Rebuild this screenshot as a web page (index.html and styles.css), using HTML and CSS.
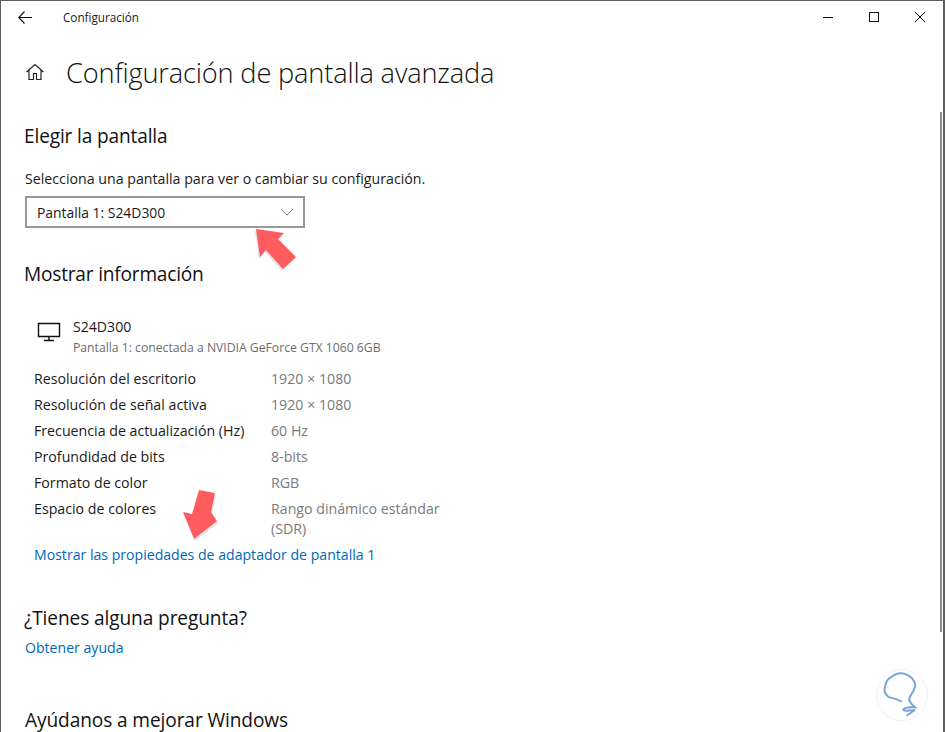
FILE: index.html
```html
<!DOCTYPE html>
<html lang="es">
<head>
<meta charset="utf-8">
<title>Configuración</title>
<link rel="stylesheet" href="styles.css">
</head>
<body>
<div class="window">
  <header class="titlebar">
    <svg class="back" width="15" height="13" viewBox="0 0 15 13"><path d="M6.5 .5 .8 6.5l5.7 6M.8 6.5H14" fill="none" stroke="#111" stroke-width="1.1"/></svg>
    <span class="apptitle">Configuración</span>
    <div class="controls">
      <svg width="12" height="12" viewBox="0 0 12 12"><path d="M1 6.5h10" stroke="#111" fill="none"/></svg>
      <svg width="12" height="12" viewBox="0 0 12 12"><rect x="1.5" y="1.5" width="9" height="9" stroke="#111" fill="none"/></svg>
      <svg width="12" height="12" viewBox="0 0 12 12"><path d="M1 1l10 10M11 1 1 11" stroke="#111" fill="none"/></svg>
    </div>
  </header>
  <main class="content">
    <div class="pagehead">
      <svg class="home" width="20" height="20" viewBox="0 0 20 20"><path d="M1.5 10 10 2.5l8.500 7.500M4 8v9.500h4.500v-6h3v6H16V8" fill="none" stroke="#222" stroke-width="1.2"/></svg>
      <h1>Configuración de pantalla avanzada</h1>
    </div>
    <h2 class="h-elegir">Elegir la pantalla</h2>
    <p class="lead">Selecciona una pantalla para ver o cambiar su configuración.</p>
    <div class="select">
      <span>Pantalla 1: S24D300</span>
      <svg width="14" height="8" viewBox="0 0 14 8"><path d="M1 1l6 6 6-6" fill="none" stroke="#777"/></svg>
    </div>
    <h2 class="h-mostrar">Mostrar información</h2>
    <div class="monitor">
      <svg width="24" height="20" viewBox="0 0 24 20"><path d="M1.500 1.500h21v13h-21zM12 15v3M7 18.500h10" fill="none" stroke="#111" stroke-width="1.400"/></svg>
      <div>
        <div class="mon-name">S24D300</div>
        <div class="mon-sub">Pantalla 1: conectada a NVIDIA GeForce GTX 1060 6GB</div>
      </div>
    </div>
    <dl class="specs">
      <div class="row"><dt>Resolución del escritorio</dt><dd>1920 × 1080</dd></div>
      <div class="row"><dt>Resolución de señal activa</dt><dd>1920 × 1080</dd></div>
      <div class="row"><dt>Frecuencia de actualización (Hz)</dt><dd>60 Hz</dd></div>
      <div class="row"><dt>Profundidad de bits</dt><dd>8-bits</dd></div>
      <div class="row"><dt>Formato de color</dt><dd>RGB</dd></div>
      <div class="row"><dt>Espacio de colores</dt><dd>Rango dinámico estándar<br>(SDR)</dd></div>
    </dl>
    <a class="link adapter" href="#">Mostrar las propiedades de adaptador de pantalla 1</a>
    <h2 class="h-pregunta">¿Tienes alguna pregunta?</h2>
    <a class="link help" href="#">Obtener ayuda</a>
    <h2 class="h-mejorar">Ayúdanos a mejorar Windows</h2>
  </main>
  <div class="scrollbar"></div>
  <svg class="arrow arrow-a" width="50" height="50" viewBox="0 0 50 50"><path d="M2 2 30 6 24 12 42 30 29 42 12 23 6 30Z" fill="#bdbdbd" opacity=".45" transform="translate(-1 2)"/><path d="M2 2 30 6 24 12 42 30 29 42 12 23 6 30Z" fill="#fe5c5e"/></svg>
  <svg class="arrow arrow-b" width="40" height="56" viewBox="0 0 40 56"><path d="M17 1 33 4 29 23 35 32 12 50 1 23 10 25Z" fill="#bdbdbd" opacity=".45" transform="translate(1 2)"/><path d="M17 1 33 4 29 23 35 32 12 50 1 23 10 25Z" fill="#fe5c5e"/></svg>
  <svg class="mark" width="54" height="54" viewBox="0 0 54 54"><circle cx="27" cy="27" r="25.500" fill="#fff" stroke="#edf1f8"/><path d="M26.700 33.700C21 30 15 30 13.300 28.700 10 26 9 22 10 18.700 11 13 14 10 16.700 8.700 20 6 24 5 26.700 5.300 32 6 37 9 38.300 12 40 15 41 17 40 18.700 39 23 37 25 35 28.700 34 31 34 33 35 33.700 36 36 37 37 40 39.300 36 39 30 39 28.300 41.300 28 43 32 43 40 42 37 44 34 46 31.700 47.700" fill="none" stroke="#78a4da" stroke-width="2"/></svg>
</div>
</body>
</html>
```
FILE: styles.css
```css
* { box-sizing: border-box; margin: 0; padding: 0; }
html, body { width: 945px; height: 732px; overflow: hidden; background: #fff; }
body { font-family: "Open Sans", "Noto Sans", sans-serif; color: #1a1a1a; }
.window {
  position: relative;
  width: 945px;
  height: 732px;
  overflow: hidden;
  background: #fff;
  border: 1px solid #5f5f5f;
  border-width: 1px 2px 0 1px;
}
.titlebar { display: flex; align-items: center; height: 32px; padding-left: 17px; }
.back { flex: none; }
.apptitle { margin-left: 30px; font-size: 11.7px; }
.controls { margin-left: auto; display: flex; gap: 34px; padding-right: 17px; }
.content { padding-left: 23px; }
.pagehead { display: flex; align-items: center; height: 48px; margin-top: 15px; margin-left: 1px; }
.home { flex: none; }
h1 { margin-left: 21px; font-size: 27.2px; font-weight: 300; letter-spacing: -.15px; color: #111; white-space: nowrap; }
h2 { font-size: 19.100px; font-weight: 400; color: #111; line-height: 24px; white-space: nowrap; letter-spacing: -.1px; }
.h-elegir { margin-top: 28px; letter-spacing: -.15px; }
.lead { margin-top: 21px; margin-left: 1px; font-size: 14.2px; line-height: 20px; }
.select {
  display: flex; align-items: center; justify-content: space-between;
  width: 280px; height: 32px; margin: 7px 0 0 1px; padding: 0 9px 0 10px;
  border: 2px solid #999; font-size: 13.9px;
}
.h-mostrar { margin-top: 34px; letter-spacing: -.2px; }
.monitor { display: flex; align-items: flex-start; margin: 31px 0 0 13px; gap: 12px; }
.monitor svg { flex: none; margin-top: 5px; }
.mon-name { font-size: 14.1px; line-height: 20px; }
.mon-sub { margin-top: 2px; font-size: 12.2px; line-height: 18px; color: #6d6d6d; }
.specs { margin: 12px 0 0 10px; font-size: 14.2px; line-height: 20px; }
.row { display: flex; margin-bottom: 6px; }
dt { width: 237px; flex: none; }
dd { color: #7a7a7a; width: 190px; }
.link { display: block; color: #0067b8; text-decoration: none; font-size: 14.1px; line-height: 20px; }
.adapter { margin: 0 0 0 10px; }
.h-pregunta { margin-top: 41px; }
.help { margin: 8px 0 0 1px; }
.h-mejorar { margin: 50px 0 0 1px; }
.scrollbar { position: absolute; left: 939px; top: 111px; width: 2px; height: 520px; background: #8a8a8a; }
.arrow, .mark { position: absolute; }
.arrow-a { left: 253px; top: 226px; }
.arrow-b { left: 181px; top: 488px; }
.mark { left: 874px; top: 667px; }
```
